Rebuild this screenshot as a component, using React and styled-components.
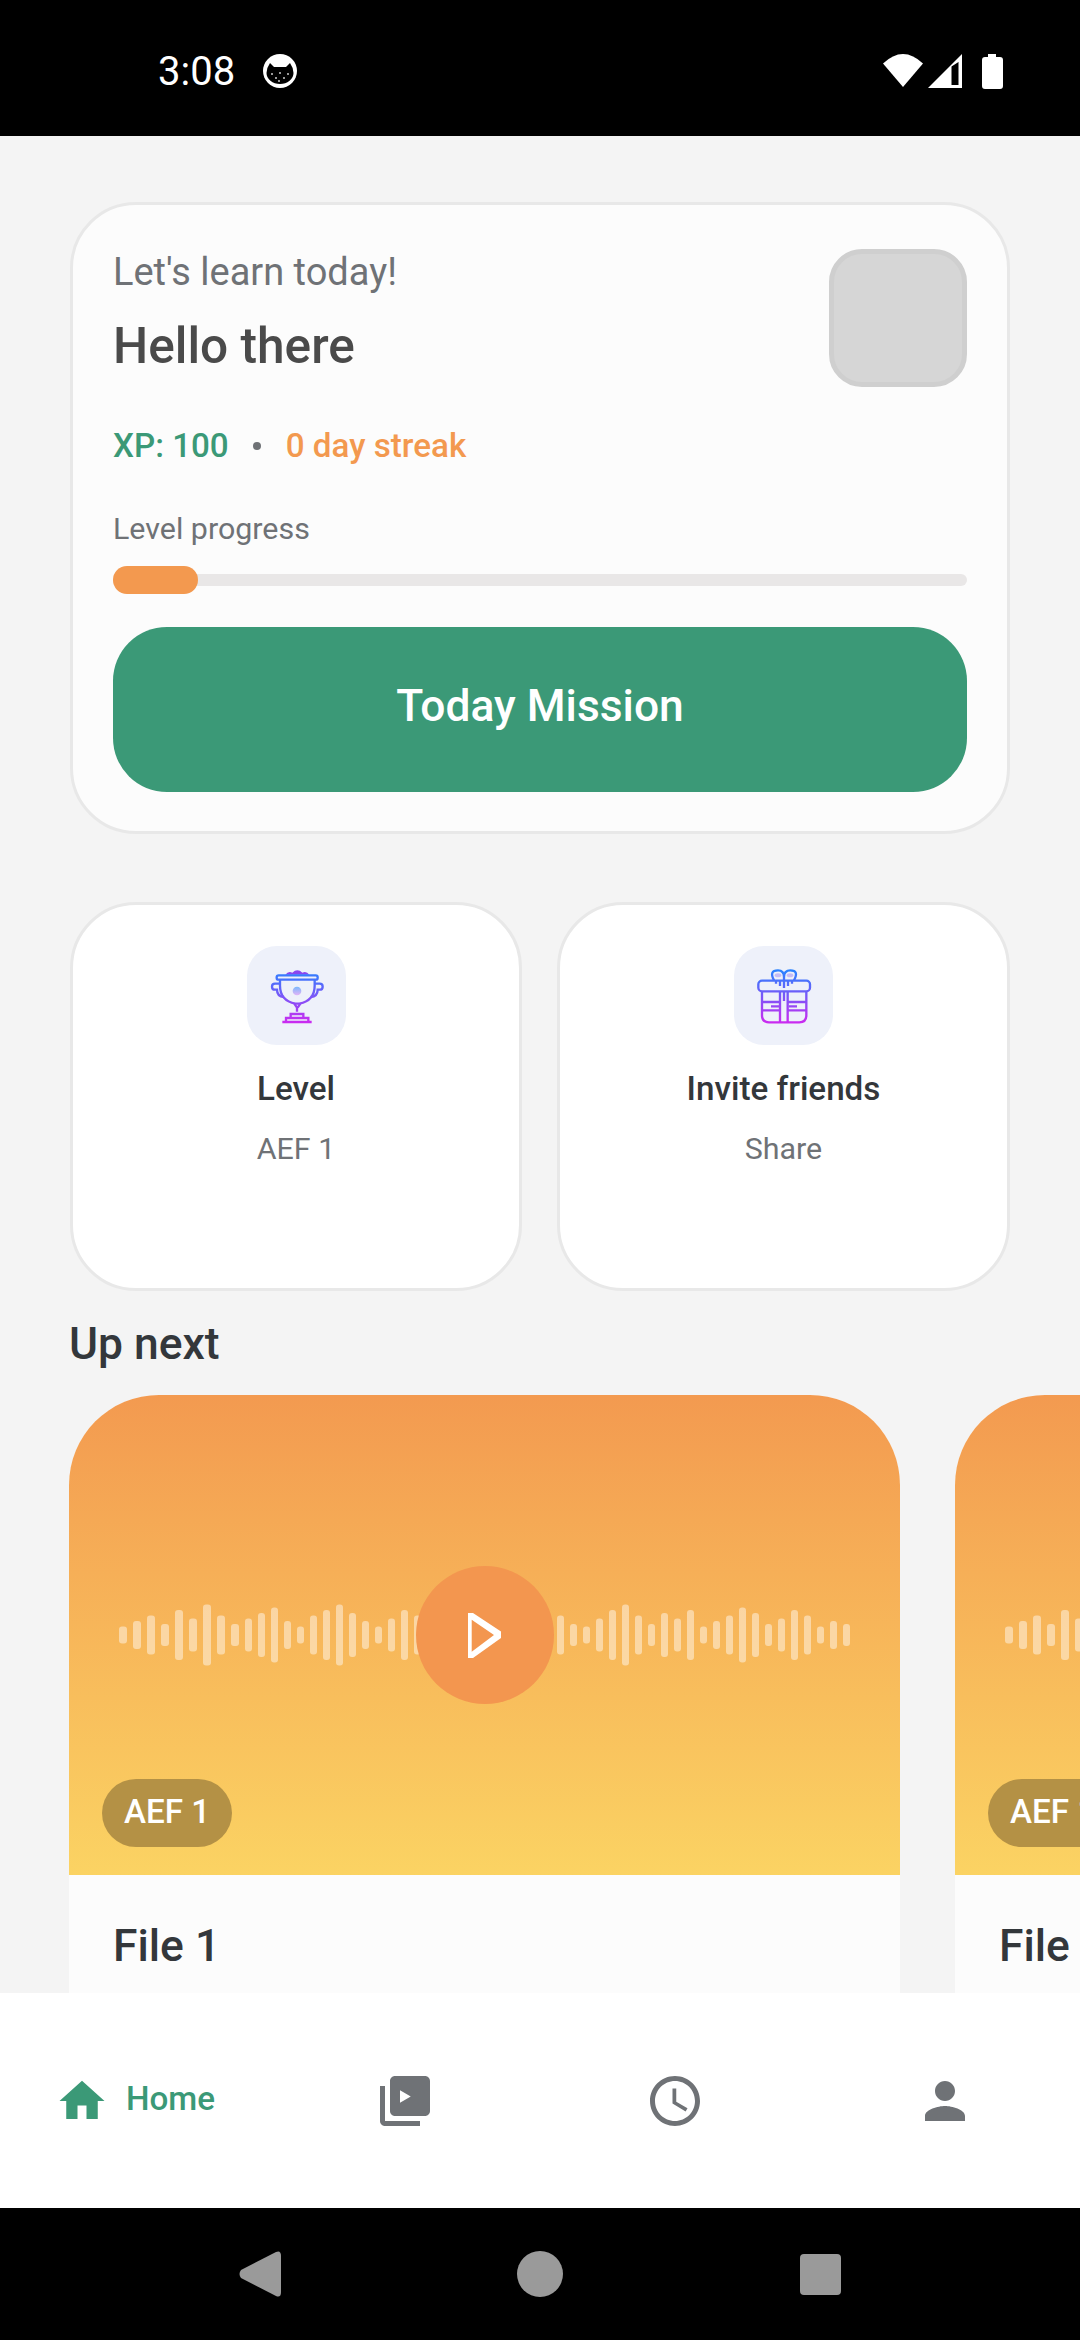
import styled, { createGlobalStyle } from "styled-components";
import { MdHome, MdAccessTime, MdPerson } from "react-icons/md";

const GlobalStyle = createGlobalStyle`
    html, body {
        margin: 0;
        padding: 0;
        background: #000;
    }
    * {
        box-sizing: border-box;
    }
`

const Screen = styled.div`
    width: 1080px;
    height: 2340px;
    display: flex;
    flex-direction: column;
    overflow: hidden;
    background: #f4f4f4;
    font-family: Roboto, "Liberation Sans", sans-serif;
`

const StatusBar = styled.div`
    flex: 0 0 136px;
    background: #000;
    color: #fff;
    display: flex;
    align-items: center;
    justify-content: space-between;
    padding: 6px 77px 0 158px;
`

const StatusLeft = styled.div`
    display: flex;
    align-items: center;
    gap: 28px;
`

const Clock = styled.span`
    font-size: 40px;
    line-height: 46px;
    margin-top: 1px;
`

const StatusRight = styled.div`
    display: flex;
    align-items: center;
    gap: 5px;
`

const BatteryIcon = styled.svg`
    margin-left: 15px;
`

const Main = styled.main`
    flex: 1;
    min-height: 0;
    overflow: hidden;
    padding: 66px 0 0 70px;
`

const Hero = styled.section`
    width: 940px;
    height: 632px;
    padding: 44px 40px 0;
    background: #fcfcfc;
    border: 3px solid #e8e8e8;
    border-radius: 66px;
`

const HeroTop = styled.div`
    display: flex;
    justify-content: space-between;
    align-items: flex-start;
`

const Greeting = styled.div`
    margin-top: 1px;
    color: #6f7276;
    font-size: 38px;
    line-height: 44px;
`

const HelloTitle = styled.h1`
    margin: 23px 0 0;
    color: #4a4a4a;
    font-size: 49.6px;
    line-height: 58px;
    font-weight: 500;
`

const Avatar = styled.div`
    width: 138px;
    height: 138px;
    background: #d6d6d6;
    border: 5px solid #cfcfcf;
    border-radius: 33px;
`

const Stats = styled.div`
    display: flex;
    align-items: center;
    margin-top: 39px;
    font-size: 33.2px;
    line-height: 40px;
    font-weight: 500;
`

const Stat = styled.span`
    color: ${(p) => p.$color};
`

const StatDot = styled.span`
    width: 8px;
    height: 8px;
    margin: 0 25px 0 24px;
    border-radius: 50%;
    background: #6f7276;
`

const ProgressLabel = styled.div`
    margin-top: 45px;
    color: #6f7276;
    font-size: 30.4px;
    line-height: 36px;
`

const ProgressTrack = styled.div`
    height: 12px;
    margin: 27px 0 0;
    background: #e9e7e7;
    border-radius: 6px;
    display: flex;
    align-items: center;
`

const ProgressFill = styled.div`
    height: 28px;
    background: #f3994f;
    border-radius: 14px;
`

const MissionButton = styled.button`
    display: block;
    width: 100%;
    height: 165px;
    margin-top: 41px;
    padding: 0 0 7px;
    border: 0;
    border-radius: 54px;
    background: #3b9977;
    color: #fff;
    font-family: inherit;
    font-size: 44.4px;
    font-weight: 500;
`

const ActionRow = styled.div`
    display: flex;
    gap: 35px;
    margin-top: 68px;
`

const ActionCard = styled.div`
    width: ${(p) => p.$width}px;
    height: 389px;
    padding-top: 41px;
    display: flex;
    flex-direction: column;
    align-items: center;
    background: #fff;
    border: 3px solid #e8e8e8;
    border-radius: 66px;
`

const IconTile = styled.div`
    width: 99px;
    height: 99px;
    background: #eef1fa;
    border-radius: 30px;
`

const ActionTitle = styled.div`
    margin-top: 24px;
    color: #33373b;
    font-size: 33.2px;
    line-height: 40px;
    font-weight: 500;
`

const ActionSub = styled.div`
    margin-top: 22px;
    color: #6f7276;
    font-size: 30.4px;
    line-height: 36px;
`

const SectionTitle = styled.h2`
    margin: 28px 0 0 -1px;
    color: #33373b;
    font-size: 44.4px;
    line-height: 50px;
    font-weight: 500;
`

const Tracks = styled.div`
    display: flex;
    gap: 55px;
    margin: 26px 0 0 -1px;
`

const TrackCard = styled.article`
    flex: 0 0 831px;
    background: #fcfcfc;
    border-radius: 90px 90px 0 0;
    overflow: hidden;
`

const Thumb = styled.div`
    position: relative;
    height: 480px;
    display: grid;
    place-items: center;
    background: linear-gradient(180deg, #f39a50 0%, #fbd363 100%);
`

const Wave = styled.svg`
    grid-area: 1 / 1;
    display: block;
`

const PlayButton = styled.div`
    grid-area: 1 / 1;
    width: 138px;
    height: 138px;
    display: flex;
    align-items: center;
    justify-content: center;
    border-radius: 50%;
    background: #f3964f;
`

const Pill = styled.span`
    position: absolute;
    left: 33px;
    bottom: 28px;
    height: 68px;
    padding: 0 22px 4px;
    display: flex;
    align-items: center;
    border-radius: 34px;
    background: #b49145;
    color: #fff;
    font-size: 33.2px;
    font-weight: 500;
`

const TrackName = styled.div`
    padding: 46px 44px;
    color: #33373b;
    font-size: 44.4px;
    line-height: 50px;
    font-weight: 500;
`

const BottomNav = styled.nav`
    flex: 0 0 215px;
    display: grid;
    grid-template-columns: repeat(4, 270px);
    background: #fff;
`

const NavItem = styled.div`
    display: flex;
    align-items: center;
    justify-content: center;
    gap: ${(p) => (p.$active ? "17px" : "0")};
    color: ${(p) => (p.$active ? "#3b9977" : "#6f7276")};
    font-size: 33.2px;
    font-weight: 500;
`

const NavLabel = styled.span`
    margin-bottom: 4px;
`

const SystemNav = styled.div`
    flex: 0 0 132px;
    background: #000;
    display: grid;
    grid-template-columns: repeat(3, 280.5px);
    justify-content: center;
    justify-items: center;
    align-items: center;
`

const HomeDot = styled.div`
    width: 46px;
    height: 46px;
    border-radius: 50%;
    background: #9a9a9a;
`

const RecentSquare = styled.div`
    width: 41px;
    height: 41px;
    border-radius: 4px;
    background: #9a9a9a;
`

const BAR_HEIGHTS = [
    17, 28, 39, 22, 50, 33, 61, 39, 22, 33, 44, 55, 28, 17, 39, 50, 61, 44, 28, 17, 33, 50, 39,
    28, 44, 55, 33, 22, 50, 39, 28, 44, 33,
    39, 22, 17, 33, 50, 61, 39, 22, 44, 33, 50, 17, 28, 39, 55, 44, 22, 33, 50, 39, 17, 28, 22,
];

// the first nine bars are a bit wider, then the pitch drops to 13
const WaveForm = () => {
    let x = 0;
    const bars = BAR_HEIGHTS.map((h, i) => {
        const w = i < 9 ? 8 : 7;
        const bar = <rect key={i} x={x} y={32 - h / 2} width={w} height={h} rx={3} />;
        x += i < 9 ? 14 : 13;
        return bar;
    });
    return (
        <Wave width="731" height="64" viewBox="0 0 731 64" fill="#fff" fillOpacity="0.45">
            {bars}
        </Wave>
    );
};

const Track = ({ name, level }) => (
    <TrackCard>
        <Thumb>
            <WaveForm />
            <PlayButton>
                <svg width="33" height="45" viewBox="0 0 33 45">
                    <path d="M0 0H5L33 18.5V25L5 45H0ZM3.7 6.7V38.7L26 22Z" fill="#fff" fillRule="evenodd" />
                </svg>
            </PlayButton>
            <Pill>{level}</Pill>
        </Thumb>
        <TrackName>{name}</TrackName>
    </TrackCard>
);

const IconGradient = ({ id }) => (
    <defs>
        <linearGradient id={id} gradientUnits="userSpaceOnUse" x1="0" y1="150" x2="0" y2="308">
            <stop offset="0" stopColor="#2a82ff" />
            <stop offset="1" stopColor="#cb2bf0" />
        </linearGradient>
        <linearGradient id={`${id}-soft`} x1="0" y1="0" x2="0" y2="1">
            <stop offset="0" stopColor="#7ab8fb" />
            <stop offset="1" stopColor="#e3b4f7" />
        </linearGradient>
    </defs>
);

const TrophyIcon = () => (
    <svg width="99" height="99" viewBox="81 77 297 297" fill="none" stroke="url(#trophy)" strokeWidth="7">
        <IconGradient id="trophy" />
        <path d="M196 163Q205 151 217 157Q232 143 247 157Q259 151 268 163Z" fill="#8a45ef" stroke="none" />
        <rect x="170" y="165" width="123" height="13" rx="6" />
        <path d="M180 178V196Q180 240 226 250H238Q284 240 284 196V178" />
        <path d="M180 190H165Q156 190 156 199Q156 208 165 208H171Q171 228 192 230" />
        <path d="M284 190H299Q308 190 308 199Q308 208 299 208H293Q293 228 272 230" />
        <path d="M223 250L231 262V274M241 250L233 262" />
        <path d="M212 292V281H250V292M198 304V293H265V304M187 305H275" />
        <circle cx="231" cy="212" r="13" fill="url(#trophy-soft)" stroke="none" />
    </svg>
);

const GiftIcon = () => (
    <svg width="99" height="99" viewBox="72 77 297 297" fill="none" stroke="url(#gift)" strokeWidth="7">
        <IconGradient id="gift" />
        <ellipse cx="204" cy="165" rx="10" ry="6" fill="#c5bcf5" stroke="none" />
        <ellipse cx="240" cy="165" rx="10" ry="6" fill="#c5bcf5" stroke="none" />
        <path d="M192 180Q176 150 204 150Q222 150 222 170Q222 150 241 150Q268 150 252 180" />
        <path d="M198 180V190M210 180V197M222 170V203M234 180V197M246 180V190" />
        <rect x="145" y="181" width="155" height="32" rx="11" />
        <path d="M156 213V285Q156 306 177 306H268Q289 306 289 285V213" />
        <path d="M210 213V306M233 213V306M222 214V242" />
        <path d="M156 245H210M233 245H289M156 270H210M233 270H289M183 258H207M236 258H261" />
    </svg>
);

const App = () => {
    return (
        <Screen>
            <GlobalStyle />
            <StatusBar>
                <StatusLeft>
                    <Clock>3:08</Clock>
                    <svg width="34" height="34" viewBox="0 0 34 34">
                        <circle cx="17" cy="17" r="17" fill="#fff" />
                        <path d="M3.5 19Q4 13 7 9L11 13H23L27 9Q30 13 30.5 19A13.5 11 0 0 1 3.5 19Z" fill="#000" />
                        <g fill="#ccc">
                            <circle cx="9" cy="20" r="1" />
                            <circle cx="13" cy="24" r="1" />
                            <circle cx="17" cy="19" r="1" />
                            <circle cx="21" cy="24" r="1" />
                            <circle cx="25" cy="20" r="1" />
                            <circle cx="16" cy="27" r="1" />
                        </g>
                    </svg>
                </StatusLeft>
                <StatusRight>
                    <svg width="40" height="34" viewBox="0 0 40 34">
                        <path d="M0 9.5Q20 -9.5 40 9.5L20 33Z" fill="#fff" />
                    </svg>
                    <svg width="34" height="34" viewBox="0 0 34 34">
                        <path d="M34 0V34H0ZM23.5 12.5V31H30.5V8Z" fill="#fff" fillRule="evenodd" />
                    </svg>
                    <BatteryIcon width="21" height="35" viewBox="0 0 21 35">
                        <path d="M6 0H14V3H18Q21 3 21 6V32Q21 35 18 35H3Q0 35 0 32V6Q0 3 3 3H6Z" fill="#fff" />
                    </BatteryIcon>
                </StatusRight>
            </StatusBar>
            <Main>
                <Hero>
                    <HeroTop>
                        <div>
                            <Greeting>Let's learn today!</Greeting>
                            <HelloTitle>Hello there</HelloTitle>
                        </div>
                        <Avatar />
                    </HeroTop>
                    <Stats>
                        <Stat $color="#3b9977">XP: 100</Stat>
                        <StatDot />
                        <Stat $color="#f3994f">0 day streak</Stat>
                    </Stats>
                    <ProgressLabel>Level progress</ProgressLabel>
                    <ProgressTrack>
                        <ProgressFill style={{ width: "10%" }} />
                    </ProgressTrack>
                    <MissionButton>Today Mission</MissionButton>
                </Hero>
                <ActionRow>
                    <ActionCard $width={452}>
                        <IconTile><TrophyIcon /></IconTile>
                        <ActionTitle>Level</ActionTitle>
                        <ActionSub>AEF 1</ActionSub>
                    </ActionCard>
                    <ActionCard $width={453}>
                        <IconTile><GiftIcon /></IconTile>
                        <ActionTitle>Invite friends</ActionTitle>
                        <ActionSub>Share</ActionSub>
                    </ActionCard>
                </ActionRow>
                <SectionTitle>Up next</SectionTitle>
                <Tracks>
                    <Track name="File 1" level="AEF 1" />
                    <Track name="File 1" level="AEF 1" />
                </Tracks>
            </Main>
            <BottomNav>
                <NavItem $active>
                    <MdHome size={54} />
                    <NavLabel>Home</NavLabel>
                </NavItem>
                <NavItem>
                    <svg width="60" height="60" viewBox="0 0 24 24" fill="currentColor">
                        <path d="M4 6H2v14c0 1.1.9 2 2 2h14v-2H4V6zm16-4H8c-1.1 0-2 .9-2 2v12c0 1.1.9 2 2 2h12c1.1 0 2-.9 2-2V4c0-1.1-.9-2-2-2zm-10 5.7v5l4.3-2.5z" fillRule="evenodd" />
                    </svg>
                </NavItem>
                <NavItem><MdAccessTime size={60} /></NavItem>
                <NavItem><MdPerson size={60} /></NavItem>
            </BottomNav>
            <SystemNav>
                <svg width="42" height="46" viewBox="0 0 42 46">
                    <path d="M37 1Q42 -1 42 5V41Q42 47 37 45L2 27Q-1 23 2 19Z" fill="#9a9a9a" />
                </svg>
                <HomeDot />
                <RecentSquare />
            </SystemNav>
        </Screen>
    );
};

export default App;
